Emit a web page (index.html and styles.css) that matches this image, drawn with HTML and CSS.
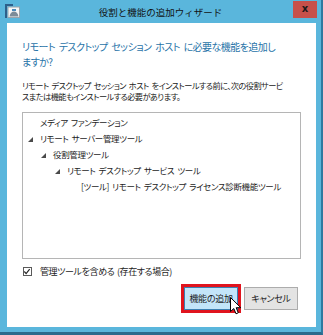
FILE: index.html
```html
<!DOCTYPE html>
<html lang="ja">
<head>
    <meta charset="UTF-8">
    <meta name="viewport" content="width=device-width, initial-scale=1.0">
    <title>役割と機能の追加ウィザード</title>
    <link rel="stylesheet" href="styles.css">
</head>
<body>
    <div class="window">
        <div class="titlebar">
            <svg class="app-icon" width="15" height="14" viewBox="0 0 15 14">
                <rect x="3" y="3" width="11.5" height="10.5" fill="#f6f6f6" stroke="#9aa4ab" stroke-width="1"/>
                <rect x="0" y="0" width="2" height="14" fill="#2d5f8a"/>
                <rect x="0" y="0" width="8" height="2" fill="#2d5f8a"/>
                <path d="M4.5 12.5 C5 9 7 7.5 9 7.5 C11 7.5 13 9 13.5 12.5 Z" fill="#7d8c98"/>
                <rect x="7" y="5" width="4" height="2" fill="#4a89b9"/>
            </svg>
            <span class="title">役割と機能の追加ウィザード</span>
            <div class="close">x</div>
        </div>

        <div class="client">
            <h1 class="heading">リモート デスクトップ セッション ホスト に必要な機能を追加し<br>ますか?</h1>

            <p class="desc">リモート デスクトップ セッション ホスト をインストールする前に、次の役割サービ<br>スまたは機能もインストールする必要があります。</p>

            <ul class="tree">
                <li class="node l0"><span class="twist"></span>メディア ファンデーション</li>
                <li class="node l0"><span class="twist open"></span>リモート サーバー管理ツール</li>
                <li class="node l1"><span class="twist open"></span>役割管理ツール</li>
                <li class="node l2"><span class="twist open"></span>リモート デスクトップ サービス ツール</li>
                <li class="node l3"><span class="twist"></span>[ツール] リモート デスクトップ ライセンス診断機能ツール</li>
            </ul>

            <label class="check">
                <span class="box">
                    <svg width="9" height="9" viewBox="0 0 9 9"><path d="M1.5 4.5 L3.5 6.8 L7.5 1.8" fill="none" stroke="#222" stroke-width="1.3"/></svg>
                </span>
                管理ツールを含める (存在する場合)
            </label>

            <div class="buttons">
                <button class="btn primary">機能の追加
                    <svg class="cursor" width="12" height="18" viewBox="0 0 12 18">
                        <path d="M0.5 0.5 L0.5 14.5 L3.8 11.5 L6 16.8 L8.3 15.8 L6.2 10.7 L10.8 10.7 Z" fill="#fff" stroke="#000" stroke-width="1"/>
                    </svg>
                </button>
                <button class="btn">キャンセル</button>
            </div>
        </div>
    </div>
</body>
</html>
```

FILE: styles.css
```css
* {
    margin: 0;
    padding: 0;
    box-sizing: border-box;
}

body {
    font-family: "Noto Sans CJK JP", "Noto Sans", sans-serif;
    background: #5ab6dc;
}

.window {
    width: 323px;
    height: 335px;
    background: #5ab6dc;
    border-right: 2px solid #2f7aa0;
    border-bottom: 3px solid #2c6a8c;
    display: flex;
    flex-direction: column;
}

/* title bar */
.titlebar {
    height: 23px;
    display: grid;
    grid-template-columns: 1fr auto 1fr;
    align-items: center;
}

.app-icon {
    margin-left: 5px;
    margin-top: -1px;
}

.title {
    font-size: 9.5px;
    color: #111;
    white-space: nowrap;
}

.close {
    justify-self: end;
    align-self: start;
    margin-top: 1px;
    margin-right: 4px;
    width: 24px;
    height: 17px;
    background: #c7504a;
    color: #1a1a1a;
    font-family: "DejaVu Sans", sans-serif;
    font-weight: bold;
    font-size: 10px;
    line-height: 15px;
    text-align: center;
}

/* white client area */
.client {
    flex: 1;
    margin: 0 5px 5px 7px;
    background: #fff;
    padding: 16px 15px 0 15px;
    white-space: nowrap;
}

.heading {
    font-size: 10px;
    font-weight: normal;
    line-height: 15px;
    letter-spacing: -0.55px;
    word-spacing: 2px;
    color: #2873a8;
    font-feature-settings: "palt";
}

.desc {
    margin-top: 11px;
    font-size: 8.2px;
    line-height: 10.5px;
    letter-spacing: -0.55px;
    word-spacing: 1.5px;
    color: #222;
    font-feature-settings: "palt";
}

/* tree list */
.tree {
    list-style: none;
    margin-top: 11px;
    height: 147px;
    border: 1px solid #b5b5b5;
    padding-top: 1px;
}

.node {
    display: flex;
    align-items: center;
    height: 16px;
    font-size: 8.5px;
    letter-spacing: -0.35px;
    word-spacing: 1.5px;
    color: #1c1c1c;
    font-feature-settings: "palt";
}

.l0 { padding-left: 5px; }
.l1 { padding-left: 18px; }
.l2 { padding-left: 32px; }
.l3 { padding-left: 46px; }

.twist {
    width: 12px;
    height: 5px;
    flex-shrink: 0;
    margin-top: 2px;
}

.twist.open {
    width: 0;
    height: 0;
    border-left: 5px solid transparent;
    border-bottom: 5px solid #4a4a4a;
    margin-right: 7px;
}

/* checkbox */
.check {
    margin-top: 7px;
    height: 11px;
    display: flex;
    align-items: center;
    gap: 8px;
    padding-left: 1px;
    font-size: 9px;
    letter-spacing: -0.4px;
    word-spacing: 1px;
    color: #1c1c1c;
    font-feature-settings: "palt";
}

.box {
    width: 9px;
    height: 9px;
    border: 1px solid #5a5a5a;
    background: #fff;
    display: flex;
}

.box svg {
    margin: -1px 0 0 -1px;
}

/* buttons */
.buttons {
    margin-top: 10px;
    margin-right: 3px;
    display: flex;
    justify-content: flex-end;
    gap: 6px;
}

.btn {
    width: 54px;
    height: 23px;
    font-family: inherit;
    font-size: 9px;
    letter-spacing: -0.3px;
    color: #1c1c1c;
    background: #e3e3e3;
    border: 1px solid #acacac;
    font-feature-settings: "palt";
}

.btn.primary {
    position: relative;
    background: #c3e5f9;
    border-color: #3c7fb1;
    outline: 3px solid #e0141e;
}

.cursor {
    position: absolute;
    left: 45px;
    top: 9px;
}
```
